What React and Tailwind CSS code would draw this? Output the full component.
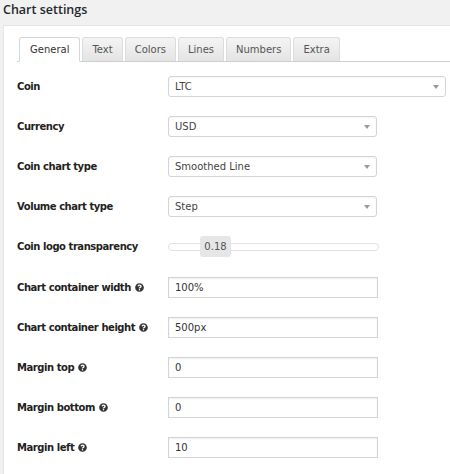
import { FaQuestionCircle } from "react-icons/fa";

const TABS = ["General", "Text", "Colors", "Lines", "Numbers", "Extra"];

const Help = () => (
  <FaQuestionCircle className="inline-block ml-[4px] text-[#333] w-[9px] h-[9px] align-[-1px]" />
);

const Select = ({ value, wide }) => (
  <div
    className={`relative flex items-center h-[21px] border border-[#d4d4d4] rounded-[3px] bg-white pl-[6px] text-[10px] text-[#444] shadow-[inset_0_1px_2px_rgba(0,0,0,0.04)] ${
      wide ? "w-[278px]" : "w-[209px]"
    }`}
  >
    {value}
    <span className="absolute right-[6px] top-[8px] w-0 h-0 border-l-[3px] border-r-[3px] border-t-[4px] border-l-transparent border-r-transparent border-t-[#999]" />
  </div>
);

const Input = ({ value }) => (
  <div className="flex items-center h-[21px] w-[210px] border border-[#d4d4d4] bg-white pl-[6px] text-[10px] text-[#333] shadow-[inset_0_1px_2px_rgba(0,0,0,0.07)]">
    {value}
  </div>
);

const Slider = ({ value }) => (
  <div className="relative w-[211px] h-[21px] flex items-center">
    <div className="w-full h-[8px] border border-[#e2e2e2] rounded-[4px] bg-white" />
    <div className="absolute left-[32px] top-0 w-[31px] h-[21px] rounded-[3px] bg-[#e6e6e6] flex items-center justify-center text-[10px] text-[#555]">
      {value}
    </div>
  </div>
);

const Row = ({ label, help, children }) => (
  <div className="flex items-center h-[40.2px]">
    <div className="w-[151px] font-bold text-[10px] tracking-[-0.45px] text-[#222]">
      {label}
      {help && <Help />}
    </div>
    {children}
  </div>
);

export default function App() {
  return (
    <div
      className="w-[450px] h-[474px] bg-[#f1f1f1] overflow-hidden"
      style={{ fontFamily: '"DejaVu Sans", Verdana, sans-serif' }}
    >
      <div
        className="h-[25px] pl-[3px] pt-[1px] text-[12.5px] font-semibold text-[#23282d]"
        style={{ fontFamily: '"Open Sans", "Noto Sans", sans-serif' }}
      >
        Chart settings
      </div>
      <div className="ml-[3px] bg-white h-full border-l border-t border-[#e5e5e5] pt-[11px] pl-[13px]">
        {/* Tabs */}
        <div className="flex items-end gap-[2px] border-b border-[#cfcfcf] pl-[2px] h-[25px]">
          {TABS.map((t, i) =>
            i === 0 ? (
              <div
                key={t}
                className="h-[25px] -mb-px px-[10px] flex items-center bg-white border border-[#d6d6d6] border-b-white rounded-t-[3px] text-[10px] text-[#333]"
              >
                {t}
              </div>
            ) : (
              <div
                key={t}
                className="h-[24px] px-[9px] flex items-center bg-gradient-to-b from-[#f4f4f4] to-[#e4e4e4] border border-[#dcdcdc] border-b-0 rounded-t-[3px] text-[10px] text-[#555]"
              >
                {t}
              </div>
            )
          )}
        </div>
        <div className="pt-[4px]">
          <Row label="Coin">
            <Select value="LTC" wide />
          </Row>
          <Row label="Currency">
            <Select value="USD" />
          </Row>
          <Row label="Coin chart type">
            <Select value="Smoothed Line" />
          </Row>
          <Row label="Volume chart type">
            <Select value="Step" />
          </Row>
          <Row label="Coin logo transparency">
            <Slider value="0.18" />
          </Row>
          <Row label="Chart container width" help>
            <Input value="100%" />
          </Row>
          <Row label="Chart container height" help>
            <Input value="500px" />
          </Row>
          <Row label="Margin top" help>
            <Input value="0" />
          </Row>
          <Row label="Margin bottom" help>
            <Input value="0" />
          </Row>
          <Row label="Margin left" help>
            <Input value="10" />
          </Row>
        </div>
      </div>
    </div>
  );
}
